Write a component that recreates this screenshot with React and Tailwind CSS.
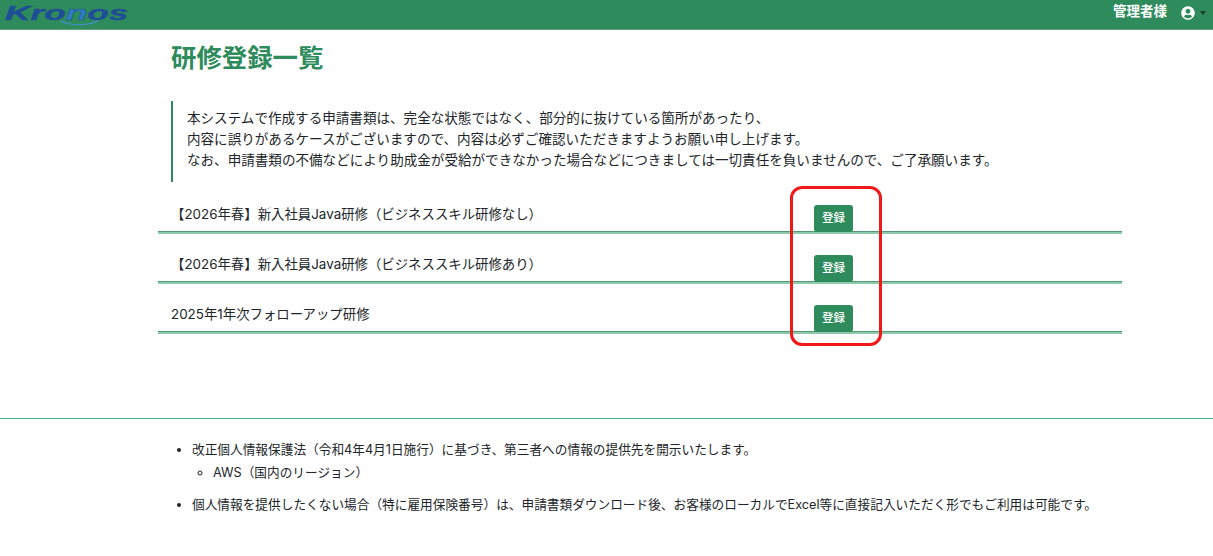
import React from 'react';
import { FaUserCircle } from 'react-icons/fa';

const FONT = "font-['Inter','Noto_Sans_CJK_JP',sans-serif]";

const courses = [
  '【2026年春】新入社員Java研修（ビジネススキル研修なし）',
  '【2026年春】新入社員Java研修（ビジネススキル研修あり）',
  '2025年1年次フォローアップ研修',
];

const Logo = () => (
  <div className="relative ml-[5px] h-[29px] w-[124px]">
    <span className="mt-[1px] block origin-left scale-x-[1.68] font-['Liberation_Sans',sans-serif] text-[21px] font-bold italic leading-[24px] text-[#1f4e96] [-webkit-text-stroke:0.4px_#1f4e96]">
      Kro<span className="text-[#2f7fc0]">n</span>os
    </span>
    {/* swoosh under the logo */}
    <svg className="absolute left-[52px] top-[19px]" width="44" height="8" viewBox="0 0 44 8" fill="none">
      <path d="M3 2 C14 7 30 7 41 2" stroke="#3f8fd0" strokeWidth="1.2" />
    </svg>
  </div>
);

const Header = () => (
  <header className="flex h-[30px] items-start justify-between border-b border-[#5fa37f] bg-[#2e8b5b]">
    <Logo />
    <div className="flex items-center pr-[7px] pt-[1px] text-white">
      <span className="mr-[1px] text-[13.5px] font-bold leading-[16px]">管理者様</span>
      <FaUserCircle className="ml-[13px] mt-[5px] h-[14px] w-[14px]" />
      <span className="ml-[5px] mt-[5px] h-0 w-0 border-x-[3.5px] border-t-[4px] border-x-transparent border-t-[#1c3d2b]" />
    </div>
  </header>
);

const CourseRow = ({ name }) => (
  <div className="flex h-[50px] items-start border-b-2 border-[#8ccaab] pl-[13px] shadow-[inset_0_-1px_0_#4f9c76]">
    <p className="mt-[20px] w-[643px] shrink-0 text-[13.4px] leading-[20px] text-[#212529]">{name}</p>
    <button className="mt-[21px] h-[27px] w-[39px] rounded-[3px] bg-[#2e8b5b] text-[11.5px] font-medium text-white">
      登録
    </button>
  </div>
);

export default function App() {
  return (
    <div className={`${FONT} relative min-h-[556px] bg-white text-[#212529]`}>
      <Header />
      <main className="ml-[158px] w-[964px]">
        <h1 className="ml-[13px] mt-[10px] text-[25.4px] font-bold leading-[36px] text-[#2e8b5b]">研修登録一覧</h1>
        <blockquote className="ml-[13px] mt-[25px] h-[81px] border-l-2 border-[#2e8b5b] pl-[14px] pt-[7px] text-[13.57px] leading-[21px]">
          <p>本システムで作成する申請書類は、完全な状態ではなく、部分的に抜けている箇所があったり、</p>
          <p>内容に誤りがあるケースがございますので、内容は必ずご確認いただきますようお願い申し上げます。</p>
          <p className="whitespace-nowrap">なお、申請書類の不備などにより助成金が受給ができなかった場合などにつきましては一切責任を負いませんので、ご了承願います。</p>
        </blockquote>
        <section className="mt-[2px]">
          {courses.map((name) => (
            <CourseRow key={name} name={name} />
          ))}
        </section>
      </main>
      <footer className="mt-[84px] border-t border-[#4fae80] pl-[176px] pt-[21px] text-[12.68px] leading-[20px]">
        <ul className="list-disc pl-[16px]">
          <li>
            改正個人情報保護法（令和4年4月1日施行）に基づき、第三者への情報の提供先を開示いたします。
            <ul className="mt-[3px] list-[circle] pl-[21px]">
              <li>AWS（国内のリージョン）</li>
            </ul>
          </li>
          <li className="mt-[12px]">
            個人情報を提供したくない場合（特に雇用保険番号）は、申請書類ダウンロード後、お客様のローカルでExcel等に直接記入いただく形でもご利用は可能です。
          </li>
        </ul>
      </footer>
      {/* red annotation drawn over the buttons */}
      <div className="pointer-events-none absolute left-[790px] top-[186px] h-[160px] w-[92px] rounded-[12px] border-[3px] border-[#f01818]" />
    </div>
  );
}
